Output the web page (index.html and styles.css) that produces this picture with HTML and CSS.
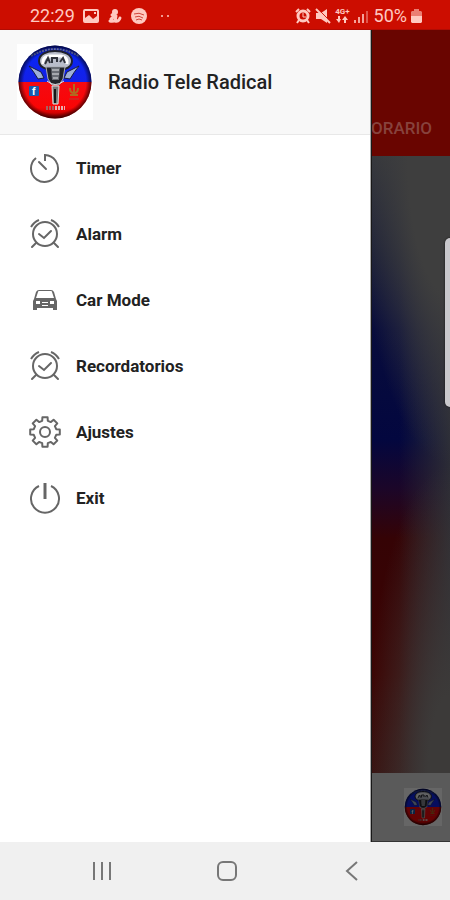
FILE: index.html
```html
<!DOCTYPE html>
<html lang="es">
<head>
<meta charset="utf-8">
<meta name="viewport" content="width=device-width, initial-scale=1">
<title>Radio Tele Radical</title>
<link rel="stylesheet" href="styles.css">
</head>
<body>
<svg class="defs" aria-hidden="true">
  <defs>
    <linearGradient id="flag" x1="0" y1="0" x2="0" y2="1">
      <stop offset="0" stop-color="#0714a8"/><stop offset=".15" stop-color="#0a25f2"/><stop offset=".5" stop-color="#1420e8"/>
      <stop offset=".5" stop-color="#f40a12"/><stop offset=".85" stop-color="#fa0505"/><stop offset="1" stop-color="#a80000"/>
    </linearGradient>
    <radialGradient id="rim">
      <stop offset=".85" stop-color="#000" stop-opacity="0"/><stop offset="1" stop-color="#000" stop-opacity=".65"/>
    </radialGradient>
    <symbol id="logo" viewBox="0 0 76 76">
      <rect width="76" height="76" fill="#fff"/>
      <circle cx="38" cy="38" r="36.500" fill="url(#flag)"/>
      <path d="M14 12Q38-2 62 12" fill="none" stroke="#7b88c8" stroke-width="2" stroke-dasharray="2 1"/>
      <path d="M12 22l12 6 3 6-6 1q-4-7-9-13zM62 22l-12 6-3 6 6 1q4-7 9-13z" fill="#9fb0d8" stroke="#171d40"/>
      <path d="M22 17c0-7 8-10 16-10s17 3 17 10c0 5-4 7-7 8H30c-4-1-8-3-8-8z" fill="#b9bdca" stroke="#20222c" stroke-width="2"/>
      <path d="M26 20q-1-7 6-8h12q7 1 6 8" fill="none" stroke="#fff" stroke-width="3"/>
      <path d="M28 20l3-6 2 5M35 19v-5h5v4M43 18l3-4 2 5" fill="none" stroke="#30333c" stroke-width="2"/>
      <path d="M29 23h19l-2 12-4 6h-7l-4-6z" fill="#22242a" stroke="#a9adb5"/>
      <path d="M34 23h9l-1 13h-7z" fill="#686c73"/>
      <path d="M35 26h7M35 30h7M36 34h5M30 37q8 7 17 0" fill="none" stroke="#e2e4e8"/>
      <path d="M35 42h7l-1 18h-5z" fill="#777" stroke="#dedede"/>
      <path d="M38 45v14" stroke="#171717" stroke-width="2"/>
      <path d="M29 64h8" stroke="#a86060" stroke-width="4" stroke-dasharray="2 1"/>
      <path d="M38 64h10" stroke="#e8b0b0" stroke-width="4" stroke-dasharray="2 1"/>
      <rect x="12" y="42" width="10" height="10" rx="1" fill="#175bae"/>
      <text x="15" y="51" fill="#fff" font-family="Roboto, sans-serif" font-weight="700" font-size="10">f</text>
      <path d="M57 40v8M53 44q0 5 4 5q4 0 4-5M53 51h8" fill="none" stroke="#b06a20" stroke-width="2"/>
      <path d="M52 55h10" stroke="#b04030"/>
      <circle cx="38" cy="38" r="36.500" fill="url(#rim)"/>
    </symbol>
    <symbol id="alarm" viewBox="0 0 32 32">
      <g fill="none" stroke="currentColor" stroke-width="2">
        <circle cx="16" cy="16" r="12"/>
        <path d="M10 16l5 4 7-7M7 25l-4 4M25 25l4 4" stroke-linecap="round"/>
        <path d="M2 9Q5 4 10 2M30 9Q27 4 22 2"/>
      </g>
    </symbol>
  </defs>
</svg>
<div class="phone">
  <header class="status">
    <div class="status-group">
      <time class="clock">22:29</time>
      <svg width="16" height="16" viewBox="0 0 16 16"><path fill="currentColor" fill-rule="evenodd" d="M2 1h12a2 2 0 0 1 2 2v10a2 2 0 0 1-2 2H2a2 2 0 0 1-2-2V3a2 2 0 0 1 2-2zm0 2v7l4-3 4 4 4-3V3zm9 1h2v2h-2z"/></svg>
      <svg width="16" height="16" viewBox="0 0 16 16"><circle cx="8" cy="4" r="3" fill="currentColor"/><path d="M8 5l-3 2 3 1-4 3M3 13q3 1 6-1M9 8l-1 5q4 1 5-3" fill="none" stroke="currentColor" stroke-width="3" stroke-linecap="round" stroke-linejoin="round"/></svg>
      <svg width="16" height="16" viewBox="0 0 16 16"><circle cx="8" cy="8" r="8" fill="currentColor"/><path d="M3 6q5-2 10 1M4 9q4-2 8 1M5 12q3-2 6 0" fill="none" stroke="#d0453a" stroke-width="1"/></svg>
      <svg class="dots" width="12" height="16" viewBox="0 0 12 16"><circle cx="3" cy="8" r="1" fill="currentColor"/><circle cx="9" cy="8" r="1" fill="currentColor"/></svg>
    </div>
    <div class="status-group status-right">
      <svg width="16" height="16" viewBox="0 0 16 16"><path fill="none" stroke="currentColor" stroke-width="2" d="M1 4l3-3M15 4l-3-3M4 12l-2 3M12 12l2 3"/><circle cx="8" cy="8" r="5" fill="none" stroke="currentColor" stroke-width="3"/><path d="M8 5v4h3" fill="none" stroke="currentColor" stroke-width="1"/></svg>
      <svg width="16" height="16" viewBox="0 0 16 16"><path fill="currentColor" d="M1 5h5l6-4v14l-6-4H1z"/><path d="M2 0l14 14" stroke="#cc0d00" stroke-width="1"/><path d="M1 1l14 14" stroke="currentColor" stroke-width="2"/></svg>
      <span class="network"><span>4G+</span><svg width="12" height="7" viewBox="0 0 12 7"><path fill="currentColor" d="M0 3l3 4 2-4H4V0H2v3zM6 4l3-4 3 4h-2v3H8V4z"/></svg></span>
      <svg width="14" height="16" viewBox="0 0 14 16"><path fill="currentColor" opacity=".8" d="M0 12h2v3H0zM4 9h2v6H4zM8 6h2v9H8z"/><path fill="currentColor" opacity=".4" d="M12 3h2v12h-2z"/></svg>
      <span class="battery">50%</span>
      <svg width="11" height="16" viewBox="0 0 11 16"><path fill="currentColor" opacity=".6" d="M3 1h5v2h2l1 1v4H0V4l1-1h2z"/><path fill="currentColor" d="M0 8h11v6l-1 1H1l-1-1z"/></svg>
    </div>
  </header>

  <main class="stage">
    <aside class="drawer">
      <div class="brand">
        <svg class="brand-logo" role="img" aria-label="Radio Tele Radical"><use href="#logo"/></svg>
        <h1>Radio Tele Radical</h1>
      </div>
      <nav class="menu">
        <button type="button"><svg viewBox="0 0 32 32"><g fill="none" stroke="currentColor" stroke-width="2"><path d="M7 6A13.500 13.500 0 1 0 16 3V9"/><path d="M10 10l7 7" stroke-linecap="round"/></g></svg>Timer</button>
        <button type="button"><svg><use href="#alarm"/></svg>Alarm</button>
        <button type="button"><svg viewBox="0 0 32 32"><path fill="currentColor" fill-rule="evenodd" d="M5 15l2-7q1-2 3-2h12q2 0 3 2l2 7 1 2v9h-4v-2H8v2H4v-9zm2-1h18l-2-6q0-1-1-1H10q-1 0-1 1zM7 17v3h4v-3zm14 0v3h4v-3zm-8 1v1h6v-1zm0 3v1h6v-1z"/></svg>Car Mode</button>
        <button type="button"><svg><use href="#alarm"/></svg>Recordatorios</button>
        <button type="button"><svg viewBox="0 0 32 32"><g fill="none" stroke="currentColor" stroke-width="2" stroke-linejoin="round"><path d="M13.200 4.800L13.400 1.200L18.600 1.200L18.800 4.800L21.900 6.100L24.600 3.700L28.300 7.400L25.900 10.100L27.200 13.200L30.800 13.400L30.800 18.600L27.200 18.800L25.900 21.900L28.300 24.600L24.600 28.300L21.900 25.900L18.800 27.200L18.600 30.800L13.400 30.800L13.200 27.200L10.100 25.900L7.400 28.300L3.700 24.600L6.100 21.900L4.800 18.800L1.200 18.600L1.200 13.400L4.800 13.200L6.100 10.100L3.700 7.400L7.400 3.700L10.100 6.100Z"/><circle cx="16" cy="16" r="5"/></g></svg>Ajustes</button>
        <button type="button"><svg viewBox="0 0 32 32"><g fill="none" stroke="currentColor" stroke-width="2"><path d="M10 4A14 14 0 1 0 22 4"/><path d="M16 1v16" stroke-width="3"/></g></svg>Exit</button>
      </nav>
    </aside>
    <section class="app">
      <div class="tabs"><span>ORARIO</span></div>
      <div class="artwork"><div class="card"></div></div>
      <div class="player"><svg class="player-logo"><use href="#logo"/></svg></div>
    </section>
  </main>

  <footer class="navbar">
    <button type="button" aria-label="Recents"><svg width="20" height="20" viewBox="0 0 20 20"><path d="M2 1v18M10 1v18M18 1v18" stroke="currentColor" stroke-width="2"/></svg></button>
    <button type="button" aria-label="Home"><svg width="20" height="20" viewBox="0 0 20 20"><rect x="1" y="1" width="18" height="18" rx="5" fill="none" stroke="currentColor" stroke-width="2"/></svg></button>
    <button type="button" aria-label="Back"><svg width="20" height="20" viewBox="0 0 20 20"><path d="M15 1L5 10l10 9" fill="none" stroke="currentColor" stroke-width="2"/></svg></button>
  </footer>
</div>
</body>
</html>
```
FILE: styles.css
```css
* { box-sizing: border-box; }
body { margin: 0; font-family: Roboto, "Liberation Sans", sans-serif; color: #222; }
button { border: 0; padding: 0; background: none; font: inherit; color: inherit; cursor: pointer; }
svg { display: block; flex: none; }
.defs { position: absolute; width: 0; height: 0; }
.phone { min-height: 100vh; display: flex; flex-direction: column; background: #fff; }

.status { height: 30px; padding: 2px 28px 0 30px; display: flex; justify-content: space-between; align-items: center; background: #cc0d00; border-bottom: 1px solid #b00c04; color: #ffc9c0; }
.status-group { display: flex; align-items: center; gap: 8px; }
.status-right { gap: 4px; }
.clock { font-size: 18px; line-height: 24px; }
.dots { margin-left: 4px; }
.battery { font-size: 18px; line-height: 24px; margin-left: 2px; }
.network { display: flex; flex-direction: column; align-items: center; font-size: 8px; line-height: 8px; font-weight: 700; }

.stage { flex: 1; display: grid; grid-template-columns: 1fr 79px; }
.drawer { background: #fff; border-right: 1px solid #aaa; }
.brand { height: 105px; padding: 0 17px; display: flex; align-items: center; gap: 15px; background: #f8f8f8; border-bottom: 1px solid #e8e8e8; }
.brand-logo { width: 76px; height: 76px; }
.brand h1 { margin: 0; font-size: 20px; line-height: 24px; font-weight: 500; }
.menu { display: flex; flex-direction: column; }
.menu button { height: 66px; padding: 0 29px; display: flex; align-items: center; gap: 15px; font-size: 17px; line-height: 24px; font-weight: 700; text-align: left; }
.menu svg { width: 32px; height: 32px; color: #666; }

.app { display: flex; flex-direction: column; overflow: hidden; border-left: 1px solid #191919; background: #3e3e3e; }
.tabs { height: 126px; padding: 0 18px 16px 0; display: flex; justify-content: flex-end; align-items: flex-end; background: #690500; color: #87423d; font-size: 17px; line-height: 24px; font-weight: 500; }
.artwork { flex: 1; padding-top: 82px; display: flex; justify-content: flex-end; align-items: flex-start; overflow: hidden;
  background:
    radial-gradient(ellipse 120% 50% at 100% 0, #3e3e3e 45%, rgb(62 62 62 / 0) 100%),
    radial-gradient(ellipse 110% 50% at 100% 100%, #3c3a39 25%, rgb(60 58 57 / 0) 100%),
    linear-gradient(90deg, rgb(46 47 54 / 0) 35%, #2e2f36 105%),
    linear-gradient(180deg, #34363c 0, #1a1e38 16%, #080c3c 28%, #03073f 46%, #1c0628 54%, #350305 62%, #3c0302 84%, #38100e 100%); }
.card { width: 5px; height: 169px; border-radius: 5px 0 0 5px; background: #c9c8cc; box-shadow: 0 0 2px #111; }
.player { height: 69px; padding: 0 8px; display: flex; justify-content: flex-end; align-items: center; background: #5a5a5a; border-bottom: 1px solid #333; }
.player-logo { width: 38px; height: 38px; filter: brightness(0.4); }

.navbar { height: 58px; padding: 0 36px 0 39px; display: flex; background: #f0f0f0; color: #777; }
.navbar button { flex: 1; display: flex; justify-content: center; align-items: center; }
```
